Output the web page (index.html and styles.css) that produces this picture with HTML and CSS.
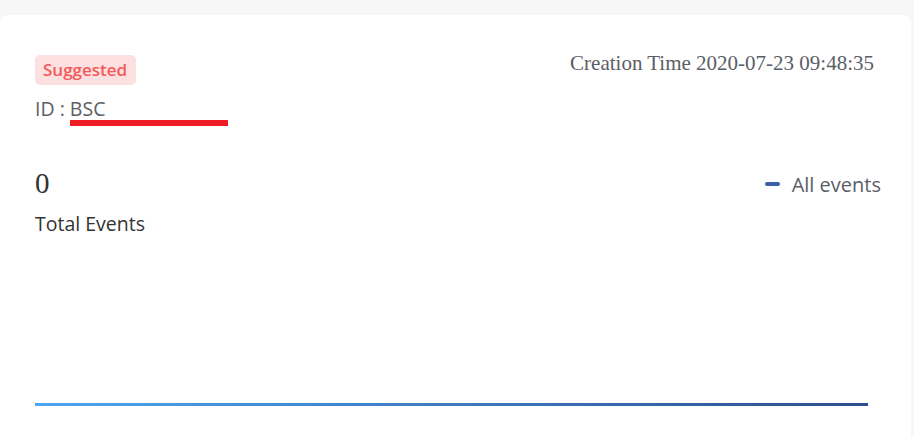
FILE: index.html
```html
<!DOCTYPE html>
<html>
<head>
<meta charset="utf-8">
<link rel="stylesheet" href="styles.css">
</head>
<body>
<div class="card">
  <div class="header">
    <div class="meta">
      <span class="badge">Suggested</span>
      <div class="id-line">ID : <span class="id-value">BSC<span class="mark"></span></span></div>
    </div>
    <div class="created">Creation Time 2020-07-23 09:48:35</div>
  </div>
  <div class="stats">
    <div class="total">
      <div class="count">0</div>
      <div class="label">Total Events</div>
    </div>
    <div class="legend"><span class="dash"></span><span class="legend-text">All events</span></div>
  </div>
  <div class="chart">
    <div class="baseline"></div>
  </div>
</div>
</body>
</html>
```
FILE: styles.css
```css
html, body {
  margin: 0;
  padding: 0;
  background: #f7f7f7;
  overflow: hidden;
}
body {
  font-family: "Open Sans", "Noto Sans", sans-serif;
  color: #555;
}
.card {
  margin-top: 15px;
  width: 911px;
  height: 440px;
  background: #fff;
  border-radius: 8px 8px 0 0;
  box-sizing: border-box;
  padding: 40px 30px 0 35px;
}
.header {
  display: flex;
  justify-content: space-between;
  align-items: flex-start;
}
.meta {
  display: flex;
  flex-direction: column;
  align-items: flex-start;
}
.badge {
  display: inline-block;
  height: 30px;
  line-height: 30px;
  padding: 0 9px 0 8px;
  border-radius: 5px;
  background: #fde0e0;
  color: #f25a5a;
  font-weight: 600;
  font-size: 17px;
}
.id-line {
  margin-top: 11px;
  font-size: 19.5px;
  line-height: 26px;
  color: #5a5e66;
}
.id-value {
  position: relative;
}
.mark {
  position: absolute;
  left: 0;
  top: 25px;
  width: 158px;
  height: 6px;
  background: #ee1c25;
}
.created {
  margin-top: -4px;
  margin-right: 7px;
  font-family: "Liberation Serif", "Times New Roman", serif;
  font-size: 21px;
  color: #5a5e66;
}
.stats {
  display: flex;
  justify-content: space-between;
  margin-top: 45px;
}
.count {
  font-family: "Liberation Serif", "Times New Roman", serif;
  font-size: 29px;
  line-height: 32px;
  color: #333;
}
.label {
  margin-top: 12px;
  font-size: 19.5px;
  line-height: 26px;
  color: #333;
}
.legend {
  display: flex;
  align-items: center;
  margin-top: 4px;
  height: 26px;
}
.dash {
  width: 15px;
  height: 4px;
  border-radius: 2px;
  background: #3a5ea8;
  margin-right: 12px;
}
.legend-text {
  font-size: 20px;
  color: #5a5e66;
}
.chart {
  height: 169px;
  display: flex;
  align-items: flex-end;
  padding-right: 13px;
}
.baseline {
  flex: 1;
  height: 3px;
  background: linear-gradient(to right, #4ea6f0, #2d4f8e);
}
```
